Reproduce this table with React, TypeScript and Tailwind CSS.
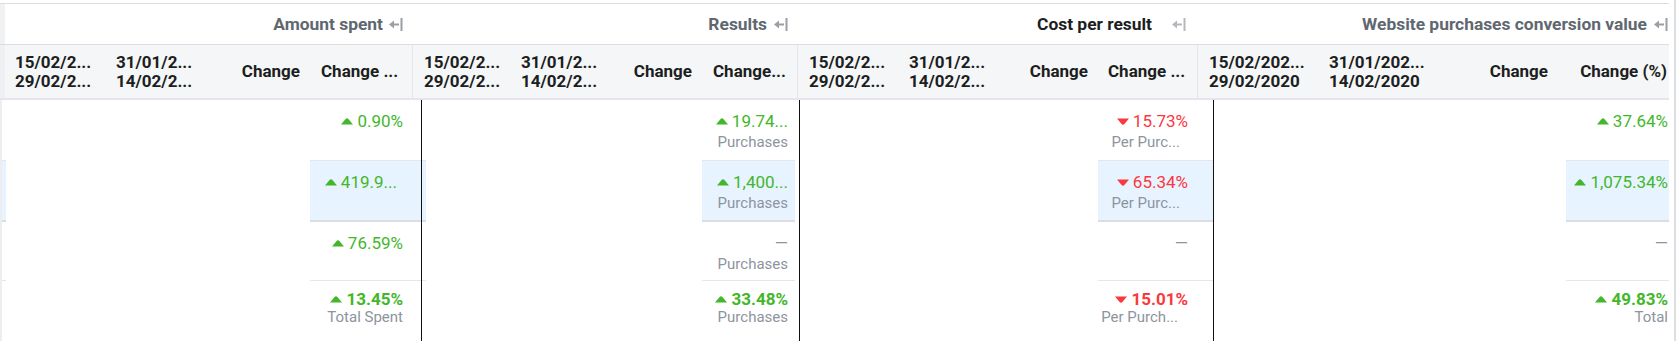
import React from 'react'

type Dir = 'up' | 'down' | 'none'
interface Cell { v: string; d: Dir; sub?: string; subMr?: string; vMr?: string }
interface Col { w: string; pr: string; rows: Cell[] }

const bodyCols: Col[] = [
  {
    w: 'w-[116px]', pr: 'pr-[23px]',
    rows: [
      { v: '0.90%', d: 'up' },
      { v: '419.9...', d: 'up', vMr: 'mr-[6px]' },
      { v: '76.59%', d: 'up' },
      { v: '13.45%', d: 'up', sub: 'Total Spent' },
    ],
  },
  {
    w: 'w-[93px]', pr: 'pr-[7px]',
    rows: [
      { v: '19.74...', d: 'up', sub: 'Purchases' },
      { v: '1,400...', d: 'up', sub: 'Purchases' },
      { v: '—', d: 'none', sub: 'Purchases' },
      { v: '33.48%', d: 'up', sub: 'Purchases' },
    ],
  },
  {
    w: 'w-[115px]', pr: 'pr-[25px]',
    rows: [
      { v: '15.73%', d: 'down', sub: 'Per Purc...', subMr: 'mr-[8px]' },
      { v: '65.34%', d: 'down', sub: 'Per Purc...', subMr: 'mr-[8px]' },
      { v: '—', d: 'none' },
      { v: '15.01%', d: 'down', sub: 'Per Purch...', subMr: 'mr-[10px]' },
    ],
  },
  {
    w: 'w-[103px]', pr: 'pr-[1px]',
    rows: [
      { v: '37.64%', d: 'up' },
      { v: '1,075.34%', d: 'up' },
      { v: '—', d: 'none' },
      { v: '49.83%', d: 'up', sub: 'Total' },
    ],
  },
]

// row boxes: 60 + 1 border, 59 + 2 border (highlighted), 58 + 1, rest
const rowBox = [
  'h-[61px] border-b border-[#e4e6eb] pt-[11px]',
  'h-[61px] border-b-2 border-[#dadde1] bg-[#e7f3ff] pt-[11px]',
  'h-[59px] border-b border-[#e4e6eb] pt-[11px]',
  'flex-1 pt-[8px]',
]

function Tri({ d }: { d: Dir }) {
  if (d === 'none') return null
  return (
    <svg width="12" height="7" viewBox="0 0 12 7" className={d === 'down' ? 'rotate-180' : ''}>
      <path
        d="M6 0.2C6.6 0.2 7 0.6 7.4 1L12 6.6H0L4.6 1C5 0.6 5.4 0.2 6 0.2Z"
        fill={d === 'up' ? '#42b72a' : '#fa383e'}
      />
    </svg>
  )
}

function ValueCol({ col }: { col: Col }) {
  return (
    <div className={`${col.w} flex flex-col`}>
      {col.rows.map((r, i) => {
        const total = i === 3
        const color = r.d === 'up' ? 'text-[#42b72a]' : r.d === 'down' ? 'text-[#fa383e]' : 'text-[#8d949e]'
        return (
          <div key={i} className={`${rowBox[i]} ${col.pr} flex flex-col items-end`}>
            <div className={`flex items-center gap-[4px] leading-[20px] text-[17px] ${color} ${total ? 'font-bold' : ''} ${r.vMr ?? ''}`}>
              <Tri d={r.d} />
              <span>{r.v}</span>
            </div>
            {r.sub && (
              <div className={`text-[15px] leading-[18px] text-[#8d949e] ${total ? '-mt-[1px]' : 'mt-[2px]'} ${r.subMr ?? ''}`}>
                {r.sub}
              </div>
            )}
          </div>
        )
      })}
    </div>
  )
}

function Strip() {
  return (
    <div className="w-[6px] flex flex-col border-l-2 border-[#eceef1]">
      {rowBox.map((c, i) => (
        <div key={i} className={c.replace(/pt-\[\d+px\]/, '')} />
      ))}
    </div>
  )
}

function Collapse({ light }: { light?: boolean }) {
  return (
    <svg width="14" height="13" viewBox="0 0 14 13" fill={light ? '#b4b8be' : '#9a9fa6'}>
      <path d="M0 6.5L5 2.6V10.4Z" />
      <rect x="4" y="5.5" width="6" height="2" />
      <rect x="11.5" y="0" width="2" height="13" />
    </svg>
  )
}

const groups = [
  { title: 'Amount spent', w: 'w-[408px]', pr: 'pr-[10px]', gap: 'gap-[6px]', dark: false },
  { title: 'Results', w: 'w-[385px]', pr: 'pr-[10px]', gap: 'gap-[7px]', dark: false },
  { title: 'Cost per result', w: 'w-[400px]', pr: 'pr-[12px]', gap: 'gap-[20px]', dark: true },
  { title: 'Website purchases conversion value', w: 'w-[471px]', pr: 'pr-[1px]', gap: 'gap-[7px]', dark: false },
]

interface HCol { w: string; lines: string[]; align?: 'right' | 'left'; pad: string; last?: boolean }

const headCols: HCol[][] = [
  [
    { w: 'w-[101px]', lines: ['15/02/2...', '29/02/2...'], pad: 'pl-[10px]' },
    { w: 'w-[100px]', lines: ['31/01/2...', '14/02/2...'], pad: 'pl-[10px]' },
    { w: 'w-[104px]', lines: ['Change'], align: 'right', pad: 'pr-[10px]' },
    { w: 'w-[103px]', lines: ['Change ...'], pad: 'pl-[11px]', last: true },
  ],
  [
    { w: 'w-[97px]', lines: ['15/02/2...', '29/02/2...'], pad: 'pl-[11px]' },
    { w: 'w-[96px]', lines: ['31/01/2...', '14/02/2...'], pad: 'pl-[11px]' },
    { w: 'w-[96px]', lines: ['Change'], align: 'right', pad: 'pr-[10px]' },
    { w: 'w-[96px]', lines: ['Change...'], pad: 'pl-[11px]', last: true },
  ],
  [
    { w: 'w-[101px]', lines: ['15/02/2...', '29/02/2...'], pad: 'pl-[11px]' },
    { w: 'w-[100px]', lines: ['31/01/2...', '14/02/2...'], pad: 'pl-[10px]' },
    { w: 'w-[99px]', lines: ['Change'], align: 'right', pad: 'pr-[10px]' },
    { w: 'w-[100px]', lines: ['Change ...'], pad: 'pl-[10px]', last: true },
  ],
  [
    { w: 'w-[121px]', lines: ['15/02/202...', '29/02/2020'], pad: 'pl-[11px]' },
    { w: 'w-[120px]', lines: ['31/01/202...', '14/02/2020'], pad: 'pl-[10px]' },
    { w: 'w-[119px]', lines: ['Change'], align: 'right', pad: 'pr-[10px]' },
    { w: 'w-[111px]', lines: ['Change (%)'], align: 'right', pad: 'pr-[2px]' },
  ],
]

export default function App() {
  return (
    <div className="w-[1677px] h-[341px] bg-white overflow-hidden flex font-[Roboto,Arial,sans-serif]">
      <div className="w-[1669px] flex flex-col">
        <div className="h-[3px]" />

        {/* group titles */}
        <div className="h-[42px] flex border-y border-[#dadde1]">
          <div className="w-[5px] bg-[#f0f1f3]" />
          {groups.map(g => (
            <div
              key={g.title}
              className={`${g.w} ${g.pr} ${g.gap} flex items-center justify-end text-[17.4px] font-bold ${g.dark ? 'text-[#1c1e21]' : 'text-[#606770]'}`}
            >
              <span className="whitespace-nowrap">{g.title}</span>
              <Collapse light={g.dark} />
            </div>
          ))}
        </div>

        {/* column headers */}
        <div className="h-[55px] flex bg-[#f5f6f7] border-b-2 border-[#e4e6eb] text-[17px] font-bold text-[#1c1e21] leading-[19px]">
          <div className="w-[5px] bg-[#eef0f2]" />
          {headCols.map((grp, gi) => (
            <div key={gi} className="flex">
              {grp.map((c, ci) => (
                <div
                  key={ci}
                  className={`${c.w} ${c.pad} flex flex-col justify-center whitespace-nowrap overflow-hidden ${c.align === 'right' ? 'items-end' : 'items-start'} ${c.last ? 'border-r border-[#e4e6eb]' : ''}`}
                >
                  {c.lines.map(l => <span key={l}>{l}</span>)}
                </div>
              ))}
            </div>
          ))}
        </div>

        {/* body */}
        <div className="flex-1 flex relative">
          <Strip />
          <div className="w-[304px]" />
          <ValueCol col={bodyCols[0]} />
          <div className="w-[276px]" />
          <ValueCol col={bodyCols[1]} />
          <div className="w-[303px]" />
          <ValueCol col={bodyCols[2]} />
          <div className="w-[353px]" />
          <ValueCol col={bodyCols[3]} />

          {/* frozen-pane divider lines drawn over the rows */}
          <div className="absolute top-0 bottom-0 left-[421px] w-px bg-[#111]" />
          <div className="absolute top-0 bottom-0 left-[799px] w-px bg-[#111]" />
          <div className="absolute top-0 bottom-0 left-[1213px] w-px bg-[#111]" />
        </div>
      </div>
      <div className="w-[7px] border-r-2 border-[#dcdee1]" />
    </div>
  )
}
